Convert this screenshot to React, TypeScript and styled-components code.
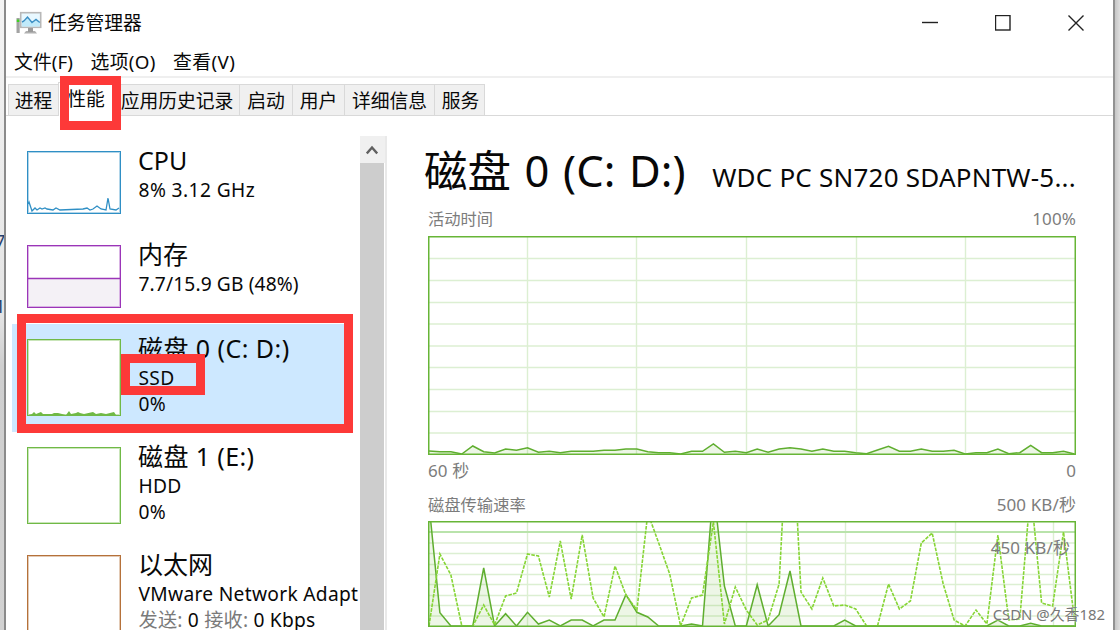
import React from "react";
import styled, { createGlobalStyle } from "styled-components";

const GlobalStyle = createGlobalStyle`
  * {
    box-sizing: border-box;
  }

  body {
    margin: 0;
    overflow: hidden;
    font-family: "Noto Sans", "Noto Sans CJK SC", sans-serif;
    color: #080808;
    background: #fff;
  }
`;

const Desktop = styled.div`
  position: relative;
  display: flex;
  width: 1120px;
  height: 630px;
  overflow: hidden;
  background: #fff;
`;

const LeftEdge = styled.div`
  display: flex;
  flex-direction: column;
  width: 6px;
  padding-top: 228px;
  overflow: hidden;
  border-right: 2px solid #8b8b8b;
  background: linear-gradient(#f4f4f4, #e4e4e4 50%, #cfcfcf 58%, #d2d2d2);
  font-size: 18px;
  line-height: 26px;
`;

const EdgeText = styled.span`
  height: 65px;
  margin-left: -5px;
  color: #24406e;
`;

const RightEdge = styled.div`
  width: 7px;
  border-left: 2px solid #929292;
  background: linear-gradient(90deg, #c6c6c6, #dedede);
`;

const Window = styled.main`
  display: flex;
  flex-direction: column;
  width: 1107px;
  height: 630px;
`;

const TitleBar = styled.header`
  display: flex;
  align-items: center;
  height: 45px;
  padding-left: 10px;
`;

const WindowTitle = styled.h1`
  flex: 1;
  margin: 0 0 0 6px;
  font-size: 18.8px;
  font-weight: 400;
  line-height: 28px;
`;

const WindowButtons = styled.div`
  display: flex;
  gap: 57px;
  margin-right: 29px;

  svg {
    display: block;
  }
`;

const MenuBar = styled.nav`
  display: flex;
  gap: 17.5px;
  height: 33px;
  padding-left: 8px;
  border-bottom: 2px solid #efefef;
  font-size: 18.8px;
  line-height: 34px;
`;

const MenuItem = styled.span<{ $spacing?: number }>`
  letter-spacing: ${(p) => p.$spacing ?? 0}px;
  white-space: nowrap;
`;

const TabBar = styled.div`
  display: flex;
  align-items: flex-end;
  height: 38px;
  padding-left: 2px;
  border-bottom: 1px solid #d9d9d9;
`;

const Tab = styled.div<{ $width: number; $active?: boolean }>`
  width: ${(p) => p.$width}px;
  height: ${(p) => (p.$active ? 34 : 31)}px;
  margin-bottom: ${(p) => (p.$active ? -1 : 0)}px;
  border: 1px solid #d9d9d9;
  border-bottom: 0;
  border-right-width: ${(p) => (p.$active ? 1 : 0)}px;
  background: ${(p) => (p.$active ? "#fff" : "#f0f0f0")};
  font-size: 18.8px;
  line-height: ${(p) => (p.$active ? 32 : 33)}px;
  text-align: center;
  white-space: nowrap;

  &:last-child {
    padding-left: 2px;
    border-right-width: 1px;
  }
`;

const Content = styled.div`
  display: flex;
  flex: 1;
  min-height: 0;
  padding-top: 20px;
`;

const Sidebar = styled.aside`
  width: 354px;
  padding-left: 6px;
  overflow: hidden;
`;

const Item = styled.div<{ $tall?: boolean; $selected?: boolean }>`
  display: flex;
  gap: 17px;
  width: 341px;
  height: ${(p) => (p.$tall ? 108 : 94)}px;
  padding: 15px 0 0 15px;
  background: ${(p) => (p.$selected ? "#cde8ff" : "transparent")};
`;

const Thumb = styled.svg<{ $color: string }>`
  flex: none;
  border: 1px solid ${(p) => p.$color};
  box-shadow: inset 0 0 0 1px ${(p) => p.$color}60;
  background: #fff;
`;

const ItemText = styled.div`
  margin-top: -6px;
  white-space: nowrap;
`;

const ItemName = styled.div<{ $spacing?: number }>`
  height: 31px;
  font-size: 25px;
  line-height: 30px;
  letter-spacing: ${(p) => p.$spacing ?? 0}px;
`;

const ItemDetail = styled.div<{ $spacing?: number }>`
  height: 25.5px;
  padding-left: 0.5px;
  font-size: 19.2px;
  line-height: 28px;
  letter-spacing: ${(p) => p.$spacing ?? 0.3}px;
`;

const Muted = styled.span`
  color: #7a7a7a;
`;

const ScrollBar = styled.div`
  display: flex;
  flex-direction: column;
  width: 27px;
  border-right: 2px solid #e9e9e9;
`;

const ScrollButton = styled.div`
  display: flex;
  align-items: center;
  justify-content: center;
  height: 27px;
  padding-right: 1px;
  background: #f0f0f0;
`;

const ScrollThumb = styled.div`
  flex: 1;
  margin-right: 1px;
  background: #cdcdcd;
`;

const Detail = styled.section`
  width: 648px;
  margin-left: 41px;
`;

const DetailHeader = styled.div`
  display: flex;
  align-items: baseline;
  justify-content: space-between;
  height: 71px;
  margin-left: -4px;
  white-space: nowrap;
`;

const DetailTitle = styled.h2`
  margin: 0;
  font-size: 43.5px;
  font-weight: 400;
  line-height: 69px;
  letter-spacing: 0.1px;
  word-spacing: 2px;
`;

const DeviceName = styled.span`
  font-size: 26px;
  letter-spacing: 0.22px;
`;

const ChartLabels = styled.div<{ $height: number; $top?: number }>`
  display: flex;
  justify-content: space-between;
  height: ${(p) => p.$height}px;
  padding-top: ${(p) => p.$top ?? 0}px;
  font-size: 16.3px;
  line-height: 24px;
  color: #7c7c7c;
`;

const Value = styled.span`
  font-size: 17px;
  letter-spacing: 0.1px;
`;

const ChartFrame = styled.div`
  position: relative;

  svg {
    display: block;
  }
`;

const ScaleLabel = styled(Value)`
  position: absolute;
  top: 15px;
  right: 6px;
  line-height: 24px;
  color: #7c7c7c;
`;

// Red marker boxes drawn on top of the window.
const Marker = styled.div<{ $x: number; $y: number; $w: number; $h: number }>`
  position: absolute;
  left: ${(p) => p.$x}px;
  top: ${(p) => p.$y}px;
  width: ${(p) => p.$w}px;
  height: ${(p) => p.$h}px;
  border: 9px solid #fd3938;
`;

const Watermark = styled.div`
  position: absolute;
  right: 15px;
  bottom: 4px;
  font-size: 14.9px;
  line-height: 24px;
  color: #777;
  text-shadow: 0 0 2px #fff;
`;

const ACTIVE_TIME = [
  3, 2.3, 2.3, 0, 8, 2.3, 1, 5, 3.7, 6.3, 1.7, 2.7, 1.3, 2.7, 2.7, 2.7, 3.7,
  3.7, 5, 5, 2.3, 1.3, 1.3, 0, 2.7, 2.7, 10, 1.7, 2.7, 1.3, 5, 1.7, 5, 6.3, 5,
  2.7, 5, 2.7, 2.7, 1.3, 0.3, 4, 7.7, 2.7, 2.7, 5, 2.7, 2.7, 3.7, 0, 1.3, 1.3,
  5, 0.3, 1.3, 8.7, 1.3, 1.3, 2.7, 0,
];

const READ_RATE = [
  122, 13.3, 0, 0, 0, 58, 0, 12.3, 0, 13.7, 2, 6, 0, 6, 6, 0, 6, 6, 31.3, 13.7,
  9, 0, 0, 0, 2, 0, 138, 40, 0, 0, 41.3, 0, 11.3, 55, 0, 0, 0, 0, 6, 0, 0, 0, 0,
  0, 0, 0, 0, 0, 0, 0, 0, 0, 6, 0, 0, 2.7, 0, 0, 0, 0,
];

const WRITE_RATE = [
  0, 72, 51, 0, 0, 21, 1, 30, 33, 72, 70, 29, 85, 27, 91, 28, 9, 60, 31, 16,
  113, 83, 52, 0, 28, 31, 104, 2, 39, 16, 1, 6, 42, 250, 34, 17, 48, 20, 21, 17,
  0, 0, 42, 17, 25, 83, 93, 42, 6, 0, 16, 2, 91, 6, 7, 137, 23, 20, 94, 6,
];

const toPoints = (values: number[], base: number) =>
  values.map((v, i) => `${(1 + i * 10.94).toFixed(1)},${base - v}`).join(" ");

interface ChartProps {
  height: number;
  columns: number[];
  rows: number[];
  values: number[];
  dashed?: number[];
  limit?: number;
}

function Chart({ height, columns, rows, values, dashed, limit }: ChartProps) {
  const base = height - 1;
  const points = toPoints(values, base);
  return (
    <svg width="648" height={height}>
      {columns.map((x) => (
        <path key={x} d={`M${x} 0V${height}`} stroke="#dcefd2" strokeWidth="1.4" />
      ))}
      {rows.map((y) => (
        <path key={y} d={`M0 ${y}H648`} stroke="#dcefd2" strokeWidth="1.4" />
      ))}
      {limit && <path d={`M0 ${limit}H648`} stroke="#b9e3ab" strokeWidth="2" />}
      <polygon
        points={`1,${base} ${points} 647,${base}`}
        fill="#4da60c"
        fillOpacity="0.1"
      />
      <polyline points={points} fill="none" stroke="#5fae2f" strokeWidth="1.5" />
      {dashed && (
        <polyline
          points={toPoints(dashed, base)}
          fill="none"
          stroke="#86d535"
          strokeWidth="1.6"
          strokeDasharray="3.6 1.2"
        />
      )}
      <rect
        x="0.75"
        y="0.75"
        width="646.5"
        height={height - 1.5}
        fill="none"
        stroke="#67b536"
        strokeWidth="1.5"
      />
    </svg>
  );
}

function TaskManagerIcon() {
  return (
    <svg width="26" height="24" viewBox="0 0 26 24">
      <rect x="0.5" y="7" width="3.2" height="15" fill="#a3a3a3" />
      <rect x="0.8" y="8.5" width="2.6" height="2.5" fill="#3ed321" />
      <path d="M10 20h9l2 2.5H8z" fill="#b0b0b0" />
      <rect x="12" y="17" width="5" height="4" fill="#9a9a9a" />
      <rect x="4.7" y="1.7" width="20" height="14.6" fill="#e8f8ff" stroke="#b8b8b8" strokeWidth="1.6" />
      <path d="M6 11l2 0 3.5-4 4.5 4.5 4-3 3.8 3v4H6z" fill="#c0eafa" />
      <path d="M6 11L8 10l3.5-4 4.5 5.5 4-3 3.8 3" fill="none" stroke="#3b8fc4" strokeWidth="1.4" />
    </svg>
  );
}

export default function App() {
  return (
    <>
      <GlobalStyle />
      <Desktop>
        <LeftEdge>
          <EdgeText>7</EdgeText>
          <EdgeText>1</EdgeText>
        </LeftEdge>
        <Window>
          <TitleBar>
            <TaskManagerIcon />
            <WindowTitle>任务管理器</WindowTitle>
            <WindowButtons>
              <svg width="16" height="16">
                <path d="M0 7.5H16" stroke="#222" strokeWidth="1.4" />
              </svg>
              <svg width="16" height="16">
                <rect x="0.5" y="0.5" width="14.5" height="14.5" fill="none" stroke="#222" strokeWidth="1.4" />
              </svg>
              <svg width="16" height="16">
                <path d="M0.5 0.5L15.5 15.5M15.5 0.5L0.5 15.5" stroke="#222" strokeWidth="1.4" />
              </svg>
            </WindowButtons>
          </TitleBar>

          <MenuBar>
            <MenuItem $spacing={0.1}>文件(F)</MenuItem>
            <MenuItem $spacing={0.3}>选项(O)</MenuItem>
            <MenuItem $spacing={0.4}>查看(V)</MenuItem>
          </MenuBar>

          <TabBar>
            <Tab $width={50}>进程</Tab>
            <Tab $width={56} $active>
              性能
            </Tab>
            <Tab $width={125}>应用历史记录</Tab>
            <Tab $width={53}>启动</Tab>
            <Tab $width={52}>用户</Tab>
            <Tab $width={90}>详细信息</Tab>
            <Tab $width={51}>服务</Tab>
          </TabBar>

          <Content>
            <Sidebar>
              <Item>
                <Thumb $color="#2f8fc5" width="94" height="63" viewBox="0 0 92 61">
                  <path
                    d="M0 52L1 50L4 59L7 56L9 58L12 56L14 57L17 56L19 57L25 58L28 56L32 58L55 57L59 56L62 58L65 57L69 54L73 57L78 58L80 46L82 57L88 58L91 56"
                    fill="none"
                    stroke="#2f8fc5"
                    strokeWidth="1.3"
                  />
                </Thumb>
                <ItemText>
                  <ItemName>CPU</ItemName>
                  <ItemDetail $spacing={0.4}>8% 3.12 GHz</ItemDetail>
                </ItemText>
              </Item>
              <Item>
                <Thumb $color="#9b35b8" width="94" height="63" viewBox="0 0 92 61">
                  <rect x="1" y="32" width="90" height="28" fill="#f4f1f6" />
                  <path d="M0 32.5H92" stroke="#9b35b8" strokeWidth="1.3" />
                </Thumb>
                <ItemText>
                  <ItemName>内存</ItemName>
                  <ItemDetail $spacing={0.12}>7.7/15.9 GB (48%)</ItemDetail>
                </ItemText>
              </Item>
              <Item $tall $selected>
                <Thumb $color="#70b946" width="94" height="77" viewBox="0 0 92 75">
                  <path
                    d="M0 75L4 74L6 72L8 74L13 72L15 74L24 74L26 73L30 73L38 75L41 71L43 74L48 73L50 72L52 73L56 74L65 72L68 74L73 73L78 74L86 72L88 75Z"
                    fill="#70b946"
                  />
                </Thumb>
                <ItemText>
                  <ItemName $spacing={0.45}>磁盘 0 (C: D:)</ItemName>
                  <ItemDetail>SSD</ItemDetail>
                  <ItemDetail>0%</ItemDetail>
                </ItemText>
              </Item>
              <Item $tall>
                <Thumb $color="#70b946" width="94" height="77" />
                <ItemText>
                  <ItemName $spacing={0.4}>磁盘 1 (E:)</ItemName>
                  <ItemDetail>HDD</ItemDetail>
                  <ItemDetail>0%</ItemDetail>
                </ItemText>
              </Item>
              <Item $tall>
                <Thumb $color="#b5713a" width="94" height="77" />
                <ItemText>
                  <ItemName>以太网</ItemName>
                  <ItemDetail>VMware Network Adapt</ItemDetail>
                  <ItemDetail $spacing={0.2}>
                    <Muted>发送:</Muted> 0 <Muted>接收:</Muted> 0 Kbps
                  </ItemDetail>
                </ItemText>
              </Item>
            </Sidebar>

            <ScrollBar>
              <ScrollButton>
                <svg width="12" height="10">
                  <path d="M0.8 8.5L6 2.5L11.2 8.5" fill="none" stroke="#606060" strokeWidth="2.4" />
                </svg>
              </ScrollButton>
              <ScrollThumb />
            </ScrollBar>

            <Detail>
              <DetailHeader>
                <DetailTitle>磁盘 0 (C: D:)</DetailTitle>
                <DeviceName>WDC PC SN720 SDAPNTW-5...</DeviceName>
              </DetailHeader>
              <ChartLabels $height={29}>
                <span>活动时间</span>
                <Value>100%</Value>
              </ChartLabels>
              <ChartFrame>
                <Chart
                  height={219}
                  columns={[99.5, 208.5, 318.5, 428.5, 537.5]}
                  rows={[22.5, 44.5, 66.5, 88, 110, 131.5, 153.5, 175.5, 197]}
                  values={ACTIVE_TIME}
                />
              </ChartFrame>
              <ChartLabels $height={38} $top={4}>
                <Value>60 秒</Value>
                <Value>0</Value>
              </ChartLabels>
              <ChartLabels $height={28}>
                <span>磁盘传输速率</span>
                <Value>500 KB/秒</Value>
              </ChartLabels>
              <ChartFrame>
                <Chart
                  height={106}
                  columns={[99.5, 208.5, 318.5, 417.5, 527.5, 625.5]}
                  rows={[22, 32.5, 43.5, 53.5, 63.5, 74.5, 84.5, 95]}
                  values={READ_RATE}
                  dashed={WRITE_RATE}
                  limit={11}
                />
                <ScaleLabel>450 KB/秒</ScaleLabel>
              </ChartFrame>
            </Detail>
          </Content>
        </Window>
        <RightEdge />

        <Marker $x={60} $y={76} $w={61} $h={54} />
        <Marker $x={17} $y={314} $w={336} $h={119} />
        <Marker $x={121} $y={354} $w={84} $h={41} />
        <Watermark>CSDN @久香182</Watermark>
      </Desktop>
    </>
  );
}
